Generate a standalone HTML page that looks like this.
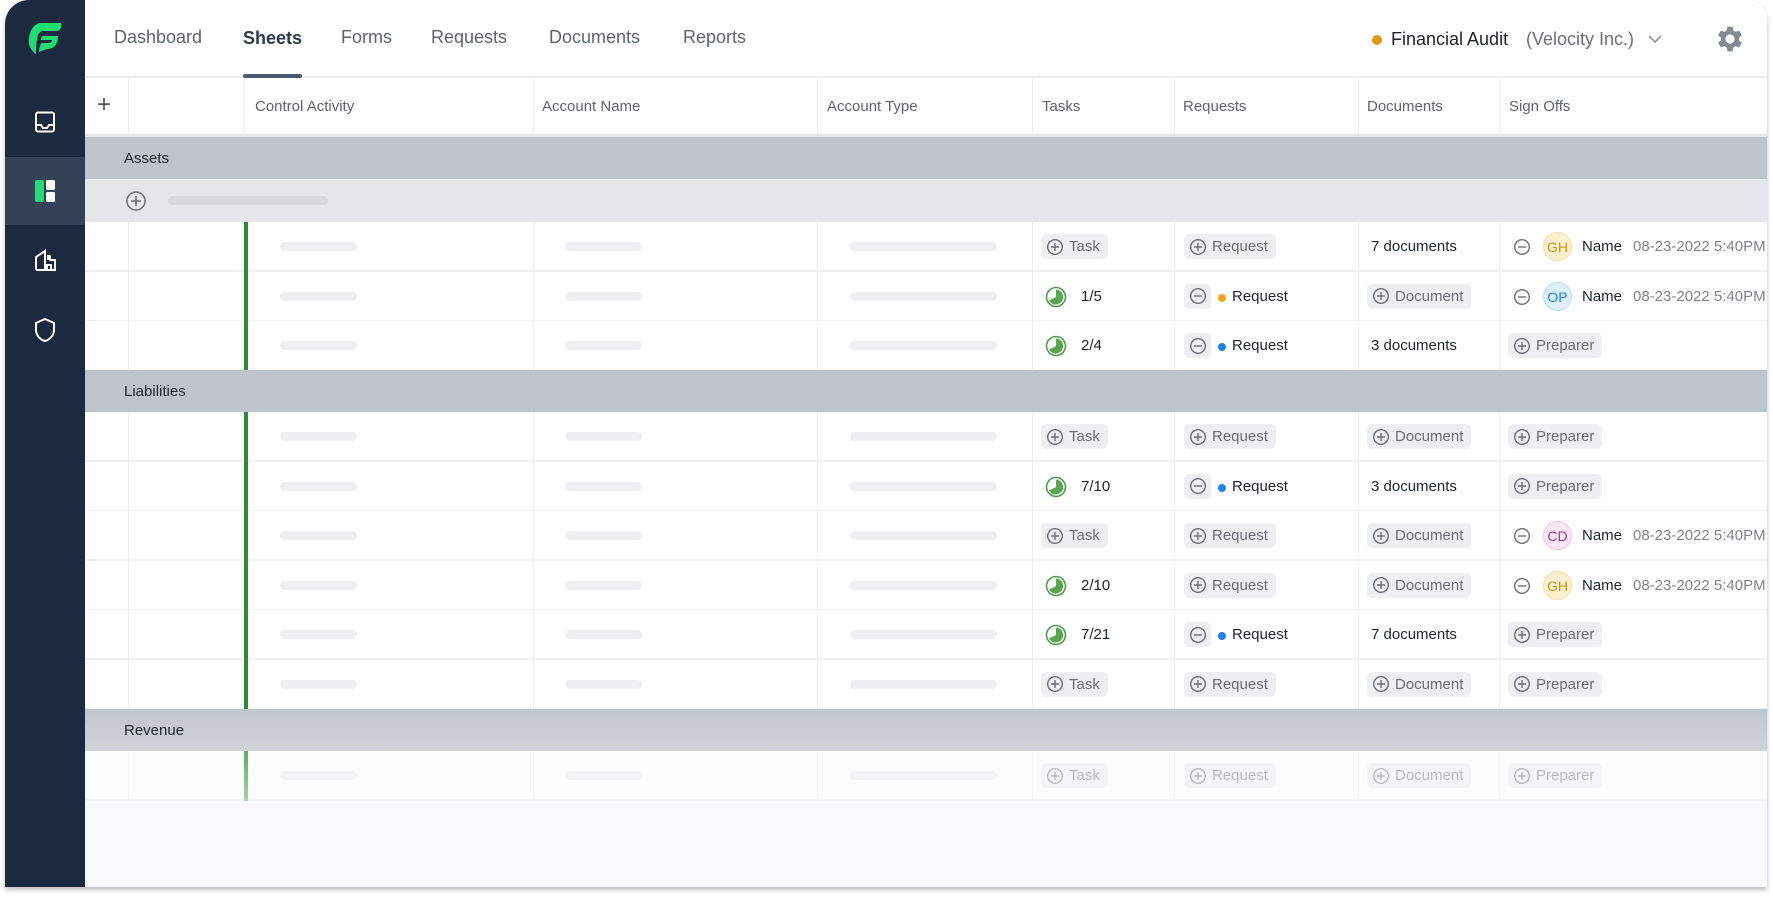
<!DOCTYPE html>
<html><head><meta charset="utf-8">
<style>
*{box-sizing:border-box;margin:0;padding:0}
body{width:1773px;height:899px;background:#fff;font-family:"Liberation Sans",sans-serif;position:relative;overflow:hidden}
.panel{position:absolute;left:5px;top:0;width:1762px;height:887px;background:#f9fafb;border-radius:24px 20px 0 0;box-shadow:0 3px 5px rgba(0,0,0,.25);overflow:hidden}
.side{position:absolute;left:0;top:0;width:80px;height:887px;background:#1b2a3f}
.side .act{position:absolute;left:0;top:157px;width:80px;height:68px;background:#334257}
.main{position:absolute;left:80px;top:0;right:0;height:887px}
.top{position:absolute;left:0;top:0;right:0;height:78px;background:#fff;border-bottom:2px solid #eceef0}
.nav{position:absolute;top:27px;font-size:18px;color:#5f646b}
.nav.on{color:#2c3a4d;font-weight:bold;top:28px}
.ul{position:absolute;left:158px;top:74px;width:59px;height:4px;border-radius:2px;background:#4a5a6d}
.row{position:absolute;left:0;right:0;height:50px;background:#fff;border-bottom:2px solid #eef0f2}
.v{position:absolute;top:0;bottom:0;width:1px;background:#eceef0}
.grp{position:absolute;left:0;right:0;height:42px;background:#bfc3ca;font-size:15px;color:#22272e}
.grp span{position:absolute;left:39px;top:13px}
.bar{position:absolute;height:9px;border-radius:5px;background:#eeeff1;top:20px}
.pill{position:absolute;top:12px;height:25px;border-radius:5px;background:#eeeff0;color:#6b6f76;font-size:15px;line-height:25px;padding:0 8px 0 5px;display:flex;align-items:center;gap:5px}
.pill svg,.mi svg{flex:none}
.mi{position:absolute;top:12px;width:27px;height:25px;border-radius:5px;background:#eeeff0;display:flex;align-items:center;justify-content:center}
.t{position:absolute;top:16px;font-size:15px;color:#1f242b}
.dot{position:absolute;top:22px;width:8px;height:8px;border-radius:50%}
.av{position:absolute;top:10px;width:29px;height:29px;border-radius:50%;font-size:14px;text-align:center;line-height:29px}
.date{position:absolute;top:16px;font-size:15px;color:#80848a;white-space:nowrap}
.green{position:absolute;left:159px;width:4px;background:#2f8a37}
.pie{position:absolute;top:14px}
</style></head><body>
<div class="panel">
 <div class="side">
  <svg style="position:absolute;left:22px;top:19px" width="38" height="38" viewBox="0 0 38 38"><path d="M13 4 L34 4 C35 9 33 12 29 12 L16 12 C13 12 11 15 10.5 18 L10 21 C9 24 9 31 9 35 C4 32 1 26 2 19 C3 11 7 5 13 4Z" fill="#1dde72"/><path d="M16 17 L31 17 C31 25 27 30 20 30 L12 33 C12 29 13 26 15 24 L22 24 C24 24 25 22 25 21 L14 21 C14 19 15 17 16 17Z" fill="#1dde72"/></svg>
  <svg style="position:absolute;left:28px;top:110px" width="24" height="24" viewBox="0 0 24 24" fill="none" stroke="#fff" stroke-width="2"><rect x="3" y="2.5" width="18" height="19" rx="2"/><path d="M3 15h5l2 3h4l2-3h5"/></svg>
  <div class="act"></div>
  <svg style="position:absolute;left:28px;top:179px" width="24" height="24" viewBox="0 0 24 24"><rect x="2" y="1" width="9" height="22" rx="2" fill="#1dde72"/><rect x="13" y="1" width="9" height="10" rx="1.5" fill="#fff"/><rect x="13" y="13" width="9" height="10" rx="1.5" fill="#fff"/></svg>
  <svg style="position:absolute;left:28px;top:248px" width="24" height="24" viewBox="0 0 24 24" fill="none" stroke="#fff" stroke-width="2"><path d="M3 22V9l9-6v19M12 22h10V12l-5 0V8h-2v4"/><path d="M3 22h19M14 22v-5h4v5"/></svg>
  <svg style="position:absolute;left:28px;top:317px" width="24" height="26" viewBox="0 0 24 26" fill="none" stroke="#fff" stroke-width="2"><path d="M12 2 L21 6 V13 C21 19 16 23 12 24 C8 23 3 19 3 13 V6 Z"/></svg>
 </div>
 <div class="main">
  <div class="top">
   <div class="nav" style="left:29px">Dashboard</div>
   <div class="nav on" style="left:158px">Sheets</div>
   <div class="nav" style="left:256px">Forms</div>
   <div class="nav" style="left:346px">Requests</div>
   <div class="nav" style="left:464px">Documents</div>
   <div class="nav" style="left:598px">Reports</div>
   <div class="ul"></div>
   <div style="position:absolute;left:1287px;top:35px;width:10px;height:10px;border-radius:50%;background:#e09b0c"></div>
   <div style="position:absolute;left:1306px;top:29px;font-size:18px;color:#1f242b">Financial Audit</div>
   <div style="position:absolute;left:1441px;top:29px;font-size:18px;color:#6b6f76">(Velocity Inc.)</div>
   <svg style="position:absolute;left:1562px;top:33px" width="16" height="12" viewBox="0 0 16 12" fill="none" stroke="#888" stroke-width="1.5"><path d="M2 3l6 6 6-6"/></svg>
   <svg style="position:absolute;left:1631px;top:25px" width="28" height="28" viewBox="2 2 20 20"><path fill="#858a90" d="M19.4 13a7.5 7.5 0 0 0 0-2l2.1-1.6-2-3.5-2.5 1a7.6 7.6 0 0 0-1.7-1L14.9 3.2h-3.8l-.4 2.7a7.6 7.6 0 0 0-1.7 1l-2.5-1-2 3.5L6.6 11a7.5 7.5 0 0 0 0 2l-2.1 1.6 2 3.5 2.5-1a7.6 7.6 0 0 0 1.7 1l.4 2.7h3.8l.4-2.7a7.6 7.6 0 0 0 1.7-1l2.5 1 2-3.5zM13 15.3a3.3 3.3 0 1 1 0-6.6 3.3 3.3 0 0 1 0 6.6z" transform="translate(-1 0)"/></svg>
  </div>
  <div class="row" style="top:78px;height:59px;border-bottom:3px solid #e4e6e9">
   <div class="v" style="left:43px"></div><div class="v" style="left:159px"></div><div class="v" style="left:448px"></div><div class="v" style="left:732px"></div><div class="v" style="left:947px"></div><div class="v" style="left:1089px"></div><div class="v" style="left:1273px"></div><div class="v" style="left:1414px"></div>
   <div style="position:absolute;left:12px;top:13px;font-size:24px;color:#555;font-weight:300">+</div>
   <div class="t" style="left:170px;top:20px;color:#5f646b">Control Activity</div>
   <div class="t" style="left:457px;top:20px;color:#5f646b">Account Name</div>
   <div class="t" style="left:742px;top:20px;color:#5f646b">Account Type</div>
   <div class="t" style="left:957px;top:20px;color:#5f646b">Tasks</div>
   <div class="t" style="left:1098px;top:20px;color:#5f646b">Requests</div>
   <div class="t" style="left:1282px;top:20px;color:#5f646b">Documents</div>
   <div class="t" style="left:1424px;top:20px;color:#5f646b">Sign Offs</div>
  </div>
  <div class="grp" style="top:137px"><span>Assets</span></div>
  <div class="row" style="top:179px;height:43px;background:#e4e6e9;border:none">
   <svg style="position:absolute;left:40px;top:11px" width="22" height="22" viewBox="0 0 22 22" fill="none" stroke="#6b6f76" stroke-width="1.5"><circle cx="11" cy="11" r="9"/><path d="M11 6v10M6 11h10"/></svg>
   <div class="bar" style="left:83px;top:17px;width:160px;background:#d5d8dc"></div>
  </div>
  <div id="rows"></div>
 </div>
</div>
<svg width="0" height="0" style="position:absolute"><defs>
<symbol id="pl" viewBox="0 0 18 18"><circle cx="9" cy="9" r="7.3" fill="none" stroke="#6b6f76" stroke-width="1.4"/><path d="M9 5v8M5 9h8" stroke="#6b6f76" stroke-width="1.4"/></symbol>
<symbol id="mn" viewBox="0 0 18 18"><circle cx="9" cy="9" r="7.3" fill="none" stroke="#6b6f76" stroke-width="1.4"/><path d="M5 9h8" stroke="#6b6f76" stroke-width="1.4"/></symbol>
<symbol id="pie" viewBox="0 0 22 22"><circle cx="11" cy="11" r="9.5" fill="#fff" stroke="#4aa04a" stroke-width="1.6"/><path d="M11 11V3.5A7.5 7.5 0 1 1 4 14.5Z" fill="#5aa552"/></symbol>
</defs></svg>
<script>
const V=[43,159,448,732,947,1089,1273,1414];
const P=(x,l,i)=>`<div class="pill" style="left:${x}px"><svg width="18" height="18"><use href="#${i||'pl'}"/></svg>${l}</div>`;
const task=c=>c?`<svg class="pie" style="left:960px" width="22" height="22"><use href="#pie"/></svg><div class="t" style="left:996px">${c}</div>`:P(956,'Task');
const req=c=>c?`<div class="mi" style="left:1099px"><svg width="18" height="18"><use href="#mn"/></svg></div><div class="dot" style="left:1133px;background:${c=='o'?'#f5a11c':'#1e83e8'}"></div><div class="t" style="left:1147px">Request</div>`:P(1099,'Request');
const doc=c=>c?`<div class="t" style="left:1286px">${c}</div>`:P(1282,'Document');
const AV={GH:['#fdf0cf','#c79414','#f5dfa5'],OP:['#dcefff','#1e83e8','#b9dcfb'],CD:['#fbe6f5','#a23b8e','#f3c4e7']};
const so=c=>{if(!c)return P(1423,'Preparer');const a=AV[c];return `<svg style="position:absolute;left:1428px;top:16px" width="18" height="18"><use href="#mn"/></svg><div class="av" style="left:1458px;background:${a[0]};color:${a[1]};border:1px solid ${a[2]}">${c}</div><div class="t" style="left:1497px">Name</div><div class="date" style="left:1548px">08-23-2022 5:40PM</div>`};
function row(top,t,r,d,s,op){let h=`<div class="row" style="top:${top}px;height:50px${op?';opacity:.45':''}">`;V.forEach(x=>h+=`<div class="v" style="left:${x}px"></div>`);
h+=`<div class="bar" style="left:195px;width:77px"></div><div class="bar" style="left:480px;width:77px"></div><div class="bar" style="left:765px;width:147px"></div>`;
h+=task(t)+req(r)+doc(d)+so(s)+'</div>';return h}
let H='';
const A=[[0,0,'7 documents','GH'],['1/5','o',0,'OP'],['2/4','b','3 documents',0]];
A.forEach((a,i)=>H+=row(222+i*49.5,...a));
H+=`<div class="green" style="top:222px;height:148px"></div>`;
H+=`<div class="grp" style="top:370px"><span>Liabilities</span></div>`;
const L=[[0,0,0,0],['7/10','b','3 documents',0],[0,0,0,'CD'],['2/10',0,0,'GH'],['7/21','b','7 documents',0],[0,0,0,0]];
L.forEach((a,i)=>H+=row(412+i*49.5,...a));
H+=`<div class="green" style="top:412px;height:297px"></div>`;
H+=`<div class="grp" style="top:709px;background:linear-gradient(#c2c6cd,#d0d3d8)"><span>Revenue</span></div>`;
H+=row(751,0,0,0,0,1);
H+=`<div class="green" style="top:751px;height:50px;background:linear-gradient(#5fae68,#a5d0a8)"></div>`;
document.getElementById('rows').innerHTML=H;
</script>
</body></html>
